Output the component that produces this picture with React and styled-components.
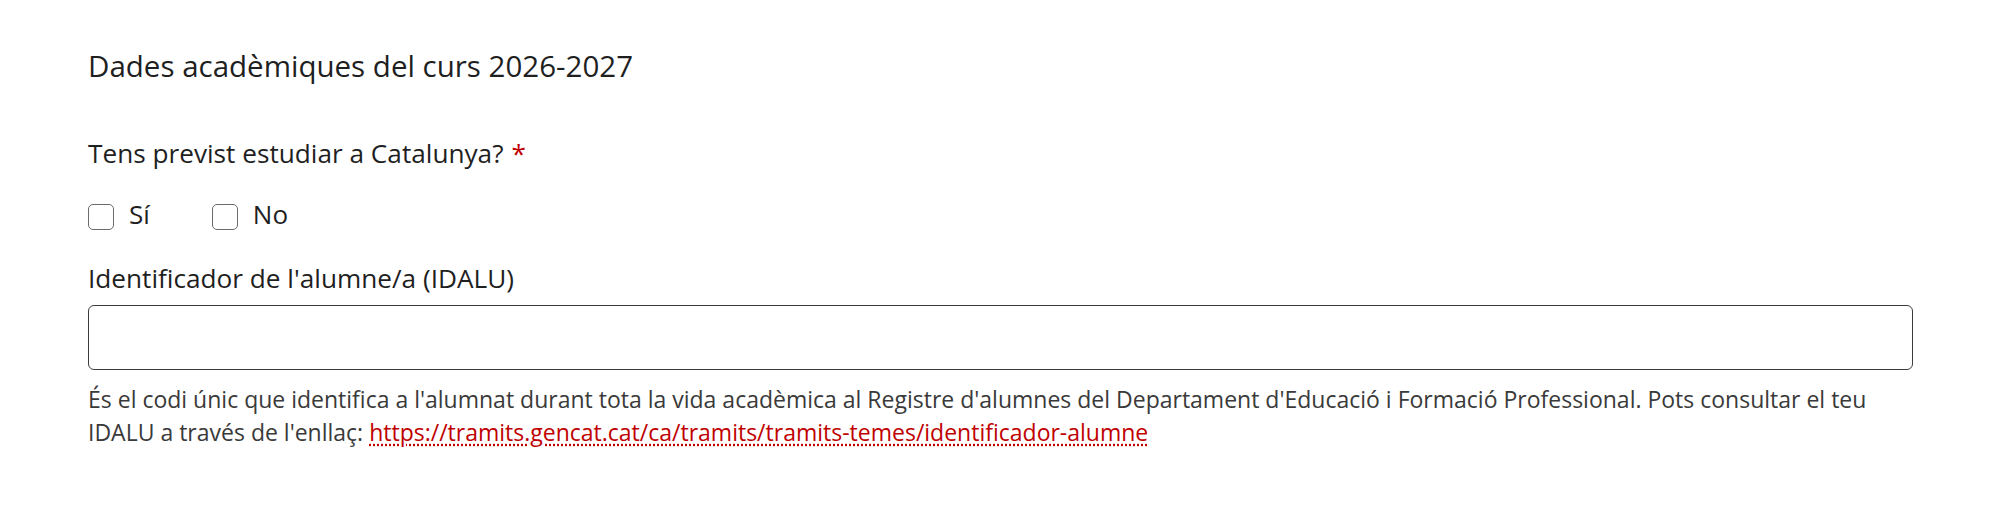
import React from "react";
import styled, { createGlobalStyle } from "styled-components";

const GlobalStyle = createGlobalStyle`
  html, body {
    margin: 0;
    padding: 0;
    background: #ffffff;
  }
  body {
    font-family: "Open Sans", "Noto Sans", sans-serif;
    color: #333333;
  }
`;

const Page = styled.main`
  padding: 46px 87px 40px 88px;
`;

const SectionTitle = styled.h2`
  margin: 0 0 49px;
  font-size: 29.5px;
  font-weight: 400;
  line-height: 40px;
  color: #1f1f1f;
`;

const Fieldset = styled.fieldset`
  margin: 0 0 28px;
  padding: 0;
  border: 0;
`;

const Legend = styled.legend`
  padding: 0;
  margin: 0 0 25px;
  font-size: 26.2px;
  line-height: 36px;
  color: #1f1f1f;
`;

const Required = styled.span`
  color: #c00000;
  margin-left: 8px;
`;

const Options = styled.div`
  display: flex;
  gap: 62px;
`;

const Option = styled.label`
  display: flex;
  align-items: flex-start;
  gap: 15px;
  font-size: 26px;
  line-height: 36px;
  color: #1f1f1f;
  cursor: pointer;
`;

const Box = styled.input.attrs({ type: "checkbox" })`
  appearance: none;
  flex: none;
  margin: 8px 0 0;
  width: 26px;
  height: 26px;
  border: 1.5px solid #6b6b6b;
  border-radius: 5px;
  background: #fff;
`;

const Field = styled.div`
  display: flex;
  flex-direction: column;
`;

const FieldLabel = styled.label`
  font-size: 26.2px;
  line-height: 36px;
  color: #1f1f1f;
  margin-bottom: 9px;
`;

const TextInput = styled.input`
  box-sizing: border-box;
  width: 100%;
  height: 65px;
  border: 1.5px solid #3c3c3c;
  border-radius: 6px;
  padding: 0 16px;
  font-family: inherit;
  font-size: 22px;
  background: #fff;
`;

const Help = styled.p`
  margin: 13px 0 0;
  font-size: 23px;
  line-height: 33px;
  color: #3a3a3a;
`;

const HelpLink = styled.a`
  color: #c00000;
  text-decoration: underline dotted;
  text-underline-offset: 3px;
`;

export default function App() {
  return (
    <>
      <GlobalStyle />
      <Page>
        <SectionTitle>Dades acadèmiques del curs 2026-2027</SectionTitle>
        <Fieldset>
          <Legend>
            Tens previst estudiar a Catalunya?<Required>*</Required>
          </Legend>
          <Options>
            <Option>
              <Box name="catalunya-si" />
              Sí
            </Option>
            <Option>
              <Box name="catalunya-no" />
              No
            </Option>
          </Options>
        </Fieldset>
        <Field>
          <FieldLabel htmlFor="idalu">Identificador de l'alumne/a (IDALU)</FieldLabel>
          <TextInput id="idalu" type="text" />
          <Help>
            És el codi únic que identifica a l'alumnat durant tota la vida acadèmica al Registre
            d'alumnes del Departament d'Educació i Formació Professional. Pots consultar el teu
            IDALU a través de l'enllaç:{" "}
            <HelpLink href="#">https://tramits.gencat.cat/ca/tramits/tramits-temes/identificador-alumne</HelpLink>
          </Help>
        </Field>
      </Page>
    </>
  );
}
